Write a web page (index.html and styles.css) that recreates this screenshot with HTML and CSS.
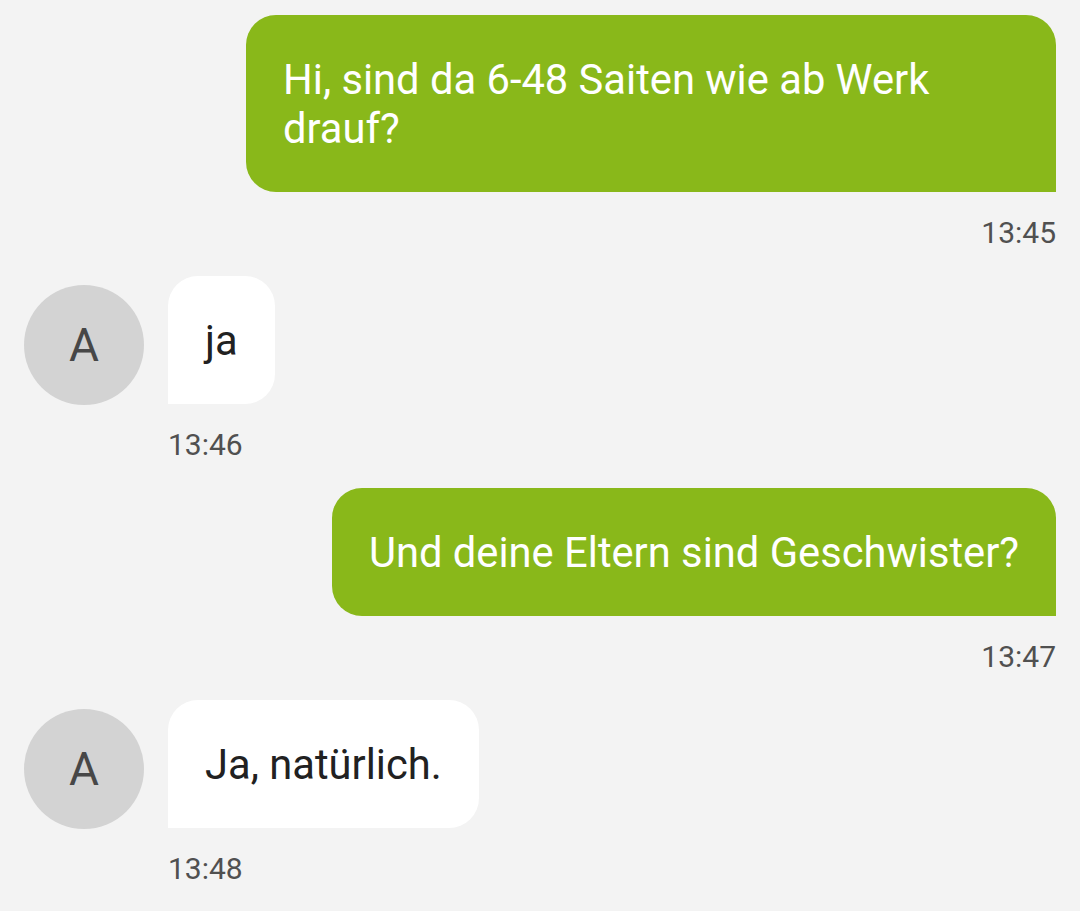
FILE: index.html
```
<!DOCTYPE html>
<html lang="de">

<head>
    <meta charset="utf-8">
    <title>Chat</title>
    <link rel="stylesheet" href="styles.css">
</head>

<body>
    <div class="chat">
        <div class="message sent">
            <div class="bubble">Hi, sind da 6-48 Saiten wie ab Werk drauf?</div>
            <div class="time">13:45</div>
        </div>

        <div class="message received">
            <div class="row">
                <div class="avatar">A</div>
                <div class="bubble">ja</div>
            </div>
            <div class="time">13:46</div>
        </div>

        <div class="message sent">
            <div class="bubble">Und deine Eltern sind Geschwister?</div>
            <div class="time">13:47</div>
        </div>

        <div class="message received">
            <div class="row">
                <div class="avatar">A</div>
                <div class="bubble">Ja, natürlich.</div>
            </div>
            <div class="time">13:48</div>
        </div>
    </div>
</body>

</html>
```

FILE: styles.css
```
body {
    margin: 0;
    background-color: #f3f3f3;
    font-family: Roboto, 'Noto Sans', sans-serif;
}

.chat {
    display: flex;
    flex-direction: column;
    padding: 15px 24px 0;
}

.message {
    display: flex;
    flex-direction: column;
    margin-bottom: 23px;
}

.sent {
    align-items: flex-end;
}

.received {
    align-items: flex-start;
}

.bubble {
    box-sizing: border-box;
    font-size: 41.7px;
    line-height: 49px;
    padding: 40px 37px 39px;
}

.sent .bubble {
    max-width: 810px;
    background-color: #89b81a;
    color: #fff;
    border-radius: 30px 30px 0 30px;
}

.received .bubble {
    background-color: #fff;
    color: #212121;
    border-radius: 30px 30px 30px 0;
}

.row {
    display: flex;
    align-items: flex-end;
    gap: 24px;
}

.avatar {
    width: 120px;
    height: 120px;
    margin-bottom: -1px;
    border-radius: 50%;
    background-color: #d3d3d3;
    color: #474747;
    font-size: 46px;
    display: flex;
    align-items: center;
    justify-content: center;
}

.time {
    margin-top: 21px;
    font-size: 30px;
    line-height: 40px;
    color: #505050;
}

.received .time {
    margin-left: 144px;
}
```
